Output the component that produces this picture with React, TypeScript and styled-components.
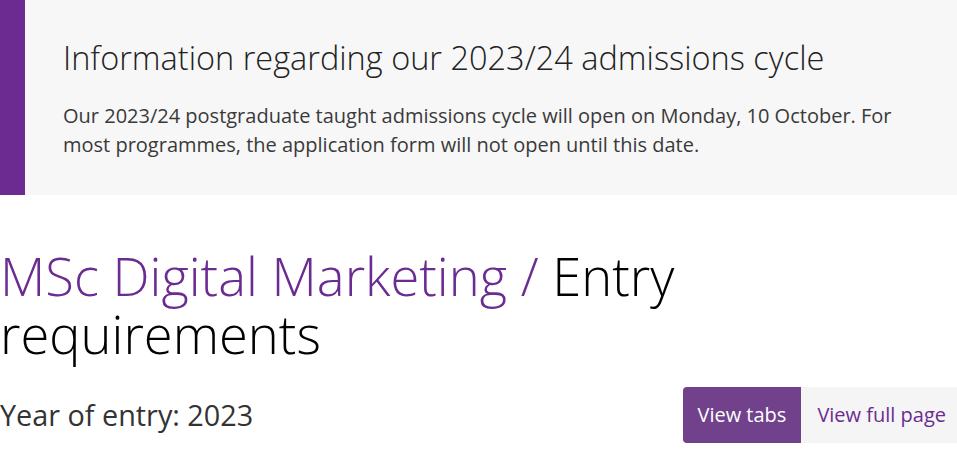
import React from "react";
import styled, { createGlobalStyle } from "styled-components";

const Global = createGlobalStyle`
  html, body { margin: 0; padding: 0; background: #fff; }
  body { font-family: "Open Sans", "DejaVu Sans", sans-serif; }
  * { box-sizing: border-box; }
`;

const Page = styled.div`
  width: 957px;
  overflow: hidden;
`;

const Notice = styled.section`
  display: flex;
  background: #f7f7f7;
  height: 195px;
`;

const Accent = styled.div`
  width: 25px;
  flex: none;
  background: #6b2b90;
`;

const NoticeBody = styled.div`
  padding: 36px 38px 0 38px;
`;

const NoticeTitle = styled.h2`
  margin: 0;
  font-weight: 300;
  font-size: 32.5px;
  line-height: 44px;
  color: #222;
`;

const NoticeText = styled.p`
  margin: 21px 0 0;
  font-size: 20px;
  line-height: 29px;
  color: #3a3a3a;
  max-width: 860px;
`;

const Title = styled.h1`
  margin: 52px 0 0;
  font-weight: 300;
  font-size: 52.5px;
  line-height: 1.1;
  color: #000;
`;

const Crumb = styled.span`
  color: #6b2c91;
`;

const EntryRow = styled.div`
  display: flex;
  align-items: center;
  justify-content: space-between;
  margin-top: 24px;
`;

const Year = styled.div`
  font-size: 28.8px;
  color: #333;
`;

const Toggle = styled.div`
  display: flex;
`;

const ToggleButton = styled.button<{ $active?: boolean }>`
  height: 56px;
  border: none;
  font-family: inherit;
  font-size: 20px;
  padding: ${(p) => (p.$active ? "0 15px 0 14px" : "0 11px 0 16px")};
  background: ${(p) => (p.$active ? "#71418b" : "#f5f5f5")};
  color: ${(p) => (p.$active ? "#fff" : "#6b2c91")};
  border-radius: ${(p) => (p.$active ? "4px 0 0 4px" : "0")};
  cursor: pointer;
`;

export default function App() {
  return (
    <Page>
      <Global />
      <Notice>
        <Accent />
        <NoticeBody>
          <NoticeTitle>Information regarding our 2023/24 admissions cycle</NoticeTitle>
          <NoticeText>
            Our 2023/24 postgraduate taught admissions cycle will open on Monday, 10 October. For
            most programmes, the application form will not open until this date.
          </NoticeText>
        </NoticeBody>
      </Notice>
      <Title>
        <Crumb>MSc Digital Marketing / </Crumb>Entry requirements
      </Title>
      <EntryRow>
        <Year>Year of entry: 2023</Year>
        <Toggle>
          <ToggleButton $active>View tabs</ToggleButton>
          <ToggleButton>View full page</ToggleButton>
        </Toggle>
      </EntryRow>
    </Page>
  );
}
